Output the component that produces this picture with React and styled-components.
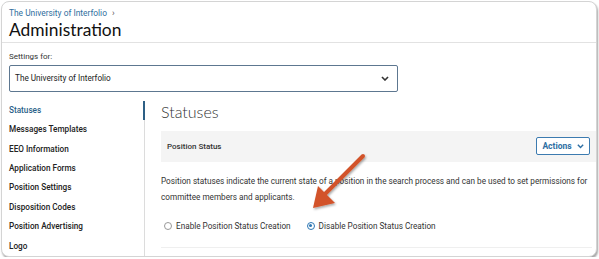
import styled, { createGlobalStyle } from 'styled-components';

const GlobalStyle = createGlobalStyle`
	html, body {
		margin: 0;
		padding: 0;
		background: #fff;
	}
	body {
		font-family: Roboto, 'Liberation Sans', sans-serif;
		color: #222;
	}
`;

const Card = styled.div`
	position: relative;
	box-sizing: border-box;
	width: 596px;
	height: 256px;
	margin: 1px 0 0 1px;
	border: 1px solid #d4d4d4;
	border-radius: 8px;
	box-shadow: 1px 2px 2px rgba(0, 0, 0, 0.35);
	background: #fff;
	overflow: hidden;
	display: flex;
	flex-direction: column;
`;

const Header = styled.div`
	padding: 5px 7px 0;
	border-bottom: 1px solid #e2e2e2;
	height: 42px;
	box-sizing: border-box;
`;

const Crumb = styled.div`
	font-size: 8.4px;
	line-height: 12px;
	color: #2f6e9e;
	display: flex;
	align-items: center;
	gap: 5px;

	span {
		color: #555;
		font-size: 9px;
	}
`;

const Title = styled.h1`
	margin: 0;
	font-family: Lato, 'Open Sans', sans-serif;
	font-weight: 400;
	font-size: 17.4px;
	line-height: 22px;
	color: #111;
`;

const Settings = styled.div`
	padding: 8px 7px 0;
`;

const Label = styled.div`
	font-size: 8px;
	line-height: 12px;
	color: #333;
	margin-bottom: 2px;
`;

const Select = styled.div`
	box-sizing: border-box;
	width: 389px;
	height: 27px;
	border: 1.5px solid #5d7790;
	border-radius: 2px;
	display: flex;
	align-items: center;
	justify-content: space-between;
	padding: 0 8px 0 5px;
	font-size: 8.2px;
	color: #222;
`;

const Body = styled.div`
	display: grid;
	grid-template-columns: 142px 1fr;
	margin-top: 9px;
	flex: 1;
`;

const Nav = styled.nav`
	display: flex;
	flex-direction: column;
	padding-left: 7px;
`;

const NavItem = styled.div`
	font-size: 8.2px;
	line-height: 19.4px;
	font-weight: 500;
	color: ${(p) => (p.$active ? '#2a5f88' : '#222')};
`;

const Main = styled.main`
	position: relative;
	border-left: 1px solid #dcdcdc;
	padding: 0 0 0 16px;
	display: flex;
	flex-direction: column;

	&::before {
		content: '';
		position: absolute;
		left: -2px;
		top: 0;
		width: 2px;
		height: 19px;
		background: #2d5f85;
	}
`;

const Heading = styled.h2`
	margin: 0;
	font-family: Lato, 'Open Sans', sans-serif;
	font-weight: 300;
	font-size: 16px;
	line-height: 22px;
	color: #333;
`;

const Panel = styled.div`
	margin-top: 8px;
	height: 31px;
	background: #f4f4f4;
	display: flex;
	align-items: center;
	justify-content: space-between;
	padding: 0 4px 0 6px;
	font-size: 8px;
	font-weight: 500;
	color: #333;
`;

const ActionsButton = styled.button`
	box-sizing: border-box;
	width: 54px;
	height: 18px;
	border: 1px solid #3c7bb0;
	border-radius: 2px;
	background: #fff;
	color: #2d6ea3;
	font-family: Roboto, 'Liberation Sans', sans-serif;
	font-size: 8.5px;
	font-weight: 700;
	display: flex;
	align-items: center;
	justify-content: center;
	gap: 5px;
	padding: 0;
	margin-right: 2px;
`;

const Text = styled.p`
	margin: 11px 0 0;
	font-size: 8.2px;
	line-height: 16px;
	color: #333;
	width: 432px;
`;

const Radios = styled.div`
	display: flex;
	gap: 16px;
	margin-top: 13px;
	padding: 0 0 13px 3px;
	border-bottom: 1px solid #efefef;
	margin-right: 4px;
`;

const RadioOption = styled.label`
	display: flex;
	align-items: center;
	gap: 4px;
	font-size: 8.2px;
	line-height: 16px;
	color: #333;
`;

const RadioDot = styled.span`
	box-sizing: border-box;
	width: 8px;
	height: 8px;
	border-radius: 50%;
	border: 1px solid ${(p) => (p.$checked ? '#2e78b5' : '#999')};
	display: flex;
	align-items: center;
	justify-content: center;

	&::after {
		content: '';
		width: 3px;
		height: 3px;
		border-radius: 50%;
		background: ${(p) => (p.$checked ? '#2e78b5' : 'transparent')};
	}
`;

const Arrow = styled.svg`
	position: absolute;
	left: 0;
	top: 0;
	pointer-events: none;
`;

const Chevron = ({ color, size = 8 }) => (
	<svg width={size} height={size * 0.65} viewBox="0 0 10 6.5">
		<polyline points="1.2,1.2 5,5 8.8,1.2" fill="none" stroke={color} strokeWidth="2" />
	</svg>
);

const navItems = [
	'Statuses',
	'Messages Templates',
	'EEO Information',
	'Application Forms',
	'Position Settings',
	'Disposition Codes',
	'Position Advertising',
	'Logo',
];

const App = () => {
	return (
		<>
			<GlobalStyle />
			<Card>
				<Header>
					<Crumb>
						The University of Interfolio <span>›</span>
					</Crumb>
					<Title>Administration</Title>
				</Header>
				<Settings>
					<Label>Settings for:</Label>
					<Select>
						The University of Interfolio
						<Chevron color="#333" />
					</Select>
				</Settings>
				<Body>
					<Nav>
						{navItems.map((item, i) => (
							<NavItem key={item} $active={i === 0}>
								{item}
							</NavItem>
						))}
					</Nav>
					<Main>
						<Heading>Statuses</Heading>
						<Panel>
							Position Status
							<ActionsButton>
								Actions
								<Chevron color="#2d6ea3" size={7} />
							</ActionsButton>
						</Panel>
						<Text>
							Position statuses indicate the current state of a position in the search process and
							can be used to set permissions for committee members and applicants.
						</Text>
						<Radios>
							<RadioOption>
								<RadioDot />
								Enable Position Status Creation
							</RadioOption>
							<RadioOption>
								<RadioDot $checked />
								Disable Position Status Creation
							</RadioOption>
						</Radios>
					</Main>
				</Body>
				<Arrow width="596" height="256" viewBox="0 0 596 256">
					<defs>
						<filter id="sh" x="-20%" y="-20%" width="140%" height="140%">
							<feDropShadow dx="1" dy="1.5" stdDeviation="1.2" floodColor="#000" floodOpacity="0.35" />
						</filter>
					</defs>
					<g filter="url(#sh)" fill="#d2532a">
						<line x1="361" y1="154" x2="322" y2="193" stroke="#d2532a" strokeWidth="4" strokeLinecap="round" />
						<polygon points="311,206 316,184 333,201" />
					</g>
				</Arrow>
			</Card>
		</>
	);
};

export default App;
